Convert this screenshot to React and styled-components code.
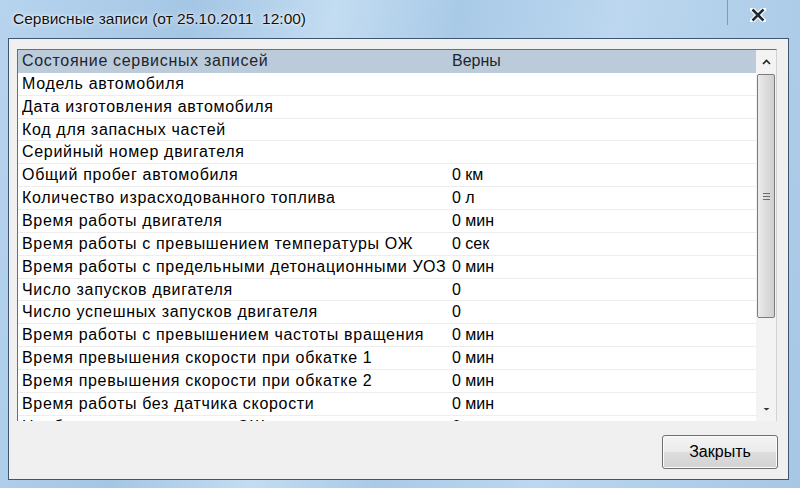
import React from "react";
import styled, { createGlobalStyle } from "styled-components";

const Global = createGlobalStyle`
  html, body {
    margin: 0;
    padding: 0;
    width: 800px;
    height: 488px;
    overflow: hidden;
    background: #a9c9e6;
  }
  * {
    box-sizing: border-box;
  }
`;

const Frame = styled.div`
  width: 800px;
  height: 488px;
  display: flex;
  flex-direction: column;
  background: linear-gradient(
    100deg,
    #b7d4ee 0%,
    #a4c6e5 22%,
    #c3dcf1 38%,
    #a9cae7 52%,
    #bcd7ef 70%,
    #a6c7e5 100%
  );
  font-family: "Liberation Sans", Arial, sans-serif;
`;

const TitleBar = styled.div`
  height: 38px;
  display: flex;
  align-items: flex-start;
  justify-content: space-between;
`;

const Title = styled.div`
  padding: 10px 0 0 13px;
  font-size: 15.5px;
  color: #111;
  text-shadow: 0 0 6px rgba(255, 255, 255, 0.9), 0 0 2px rgba(255, 255, 255, 0.9);
`;

const CloseBtn = styled.div`
  width: 62px;
  height: 25px;
  margin-right: 11px;
  border-left: 1px solid #7d9bb6;
  display: flex;
  align-items: center;
  justify-content: center;
  padding-top: 5px;
  padding-right: 2px;
`;

const Client = styled.div`
  flex: 1;
  margin: 0 11px 8px 8px;
  background: #f0f0f0;
  border: 1px solid #3f5670;
  display: flex;
  flex-direction: column;
  padding: 10px 11px 10px 8px;
`;

const ListBox = styled.div`
  height: 372px;
  display: flex;
  border-top: 1px solid #6a6f75;
  border-left: 1px solid #6a6f75;
  border-right: 1px solid #cfd3d8;
  background: #fff;
`;

const Rows = styled.div`
  flex: 1;
  overflow: hidden;
`;

const Row = styled.div`
  height: 22.87px;
  display: grid;
  grid-template-columns: 429px 1fr;
  align-items: center;
  padding-left: 4px;
  font-size: 16px;
  color: ${(p) => (p.$selected ? "#1c2530" : "#000")};
  background: ${(p) => (p.$selected ? "#bccbda" : "#fff")};
  border-bottom: 1px solid ${(p) => (p.$selected ? "#bccbda" : "#ededed")};
  white-space: nowrap;
`;

const Label = styled.span`
  overflow: hidden;
  letter-spacing: 0.68px;
`;

const Value = styled.span`
  padding-left: 1px;
`;

const ScrollBar = styled.div`
  width: 20px;
  background: #f3f3f3;
  display: flex;
  flex-direction: column;
  align-items: center;
`;

const Arrow = styled.div`
  height: 24px;
  width: 100%;
  display: flex;
  align-items: center;
  justify-content: center;
`;

const Thumb = styled.div`
  width: 18px;
  height: 244px;
  border: 1px solid #7b7b7b;
  border-radius: 2px;
  background: linear-gradient(90deg, #ececec 0%, #dcdcdc 50%, #d0d0d0 100%);
  display: flex;
  align-items: center;
  justify-content: center;
`;

const Grip = styled.div`
  width: 7px;
  display: flex;
  flex-direction: column;
  gap: 2px;
  & > i {
    display: block;
    height: 1px;
    background: #6c6c6c;
  }
`;

const Spacer = styled.div`
  flex: 1;
`;

const Footer = styled.div`
  flex: 1;
  display: flex;
  justify-content: flex-end;
  align-items: flex-end;
`;

const Button = styled.button`
  width: 116px;
  height: 34px;
  margin-right: -1px;
  border: 1px solid #6f6f6f;
  border-radius: 3px;
  background: linear-gradient(180deg, #f4f4f4 0%, #ebebeb 48%, #dddddd 52%, #d2d2d2 100%);
  box-shadow: inset 0 0 0 1px #fbfbfb;
  font-family: "Liberation Sans", Arial, sans-serif;
  font-size: 16px;
  color: #000;
  padding: 0;
`;

const rows = [
  ["Состояние сервисных записей", "Верны"],
  ["Модель автомобиля", ""],
  ["Дата изготовления автомобиля", ""],
  ["Код для запасных частей", ""],
  ["Серийный номер двигателя", ""],
  ["Общий пробег автомобиля", "0 км"],
  ["Количество израсходованного топлива", "0 л"],
  ["Время работы двигателя", "0 мин"],
  ["Время работы с превышением температуры ОЖ", "0 сек"],
  ["Время работы с предельными детонационными УОЗ", "0 мин"],
  ["Число запусков двигателя", "0"],
  ["Число успешных запусков двигателя", "0"],
  ["Время работы с превышением частоты вращения", "0 мин"],
  ["Время превышения скорости при обкатке 1", "0 мин"],
  ["Время превышения скорости при обкатке 2", "0 мин"],
  ["Время работы без датчика скорости", "0 мин"],
  ["Наибольшая температура ОЖ", "0"],
];

export default function App() {
  return (
    <>
      <Global />
      <Frame>
        <TitleBar>
          <Title>Сервисные записи (от 25.10.2011&nbsp;&nbsp;12:00)</Title>
          <CloseBtn>
            <svg width="16" height="14" viewBox="0 0 16 14">
              <path
                d="M2 1 L14 13 M14 1 L2 13"
                stroke="#fff"
                strokeWidth="5"
                strokeLinecap="round"
              />
              <path
                d="M2.5 1.5 L13.5 12.5 M13.5 1.5 L2.5 12.5"
                stroke="#1f2a36"
                strokeWidth="2.6"
              />
            </svg>
          </CloseBtn>
        </TitleBar>
        <Client>
          <ListBox>
            <Rows>
              {rows.map(([label, value], i) => (
                <Row key={i} $selected={i === 0}>
                  <Label>{label}</Label>
                  <Value>{value}</Value>
                </Row>
              ))}
            </Rows>
            <ScrollBar>
              <Arrow>
                <svg width="9" height="6" viewBox="0 0 9 6">
                  <path d="M1 5 L4.5 1.5 L8 5" stroke="#222" strokeWidth="1.6" fill="none" />
                </svg>
              </Arrow>
              <Thumb>
                <Grip>
                  <i />
                  <i />
                  <i />
                </Grip>
              </Thumb>
              <Spacer />
              <Arrow>
                <svg width="9" height="6" viewBox="0 0 9 6">
                  <path d="M1.5 2 L7.5 2 L4.5 4.5 Z" fill="#333" />
                </svg>
              </Arrow>
            </ScrollBar>
          </ListBox>
          <Footer>
            <Button>Закрыть</Button>
          </Footer>
        </Client>
      </Frame>
    </>
  );
}
